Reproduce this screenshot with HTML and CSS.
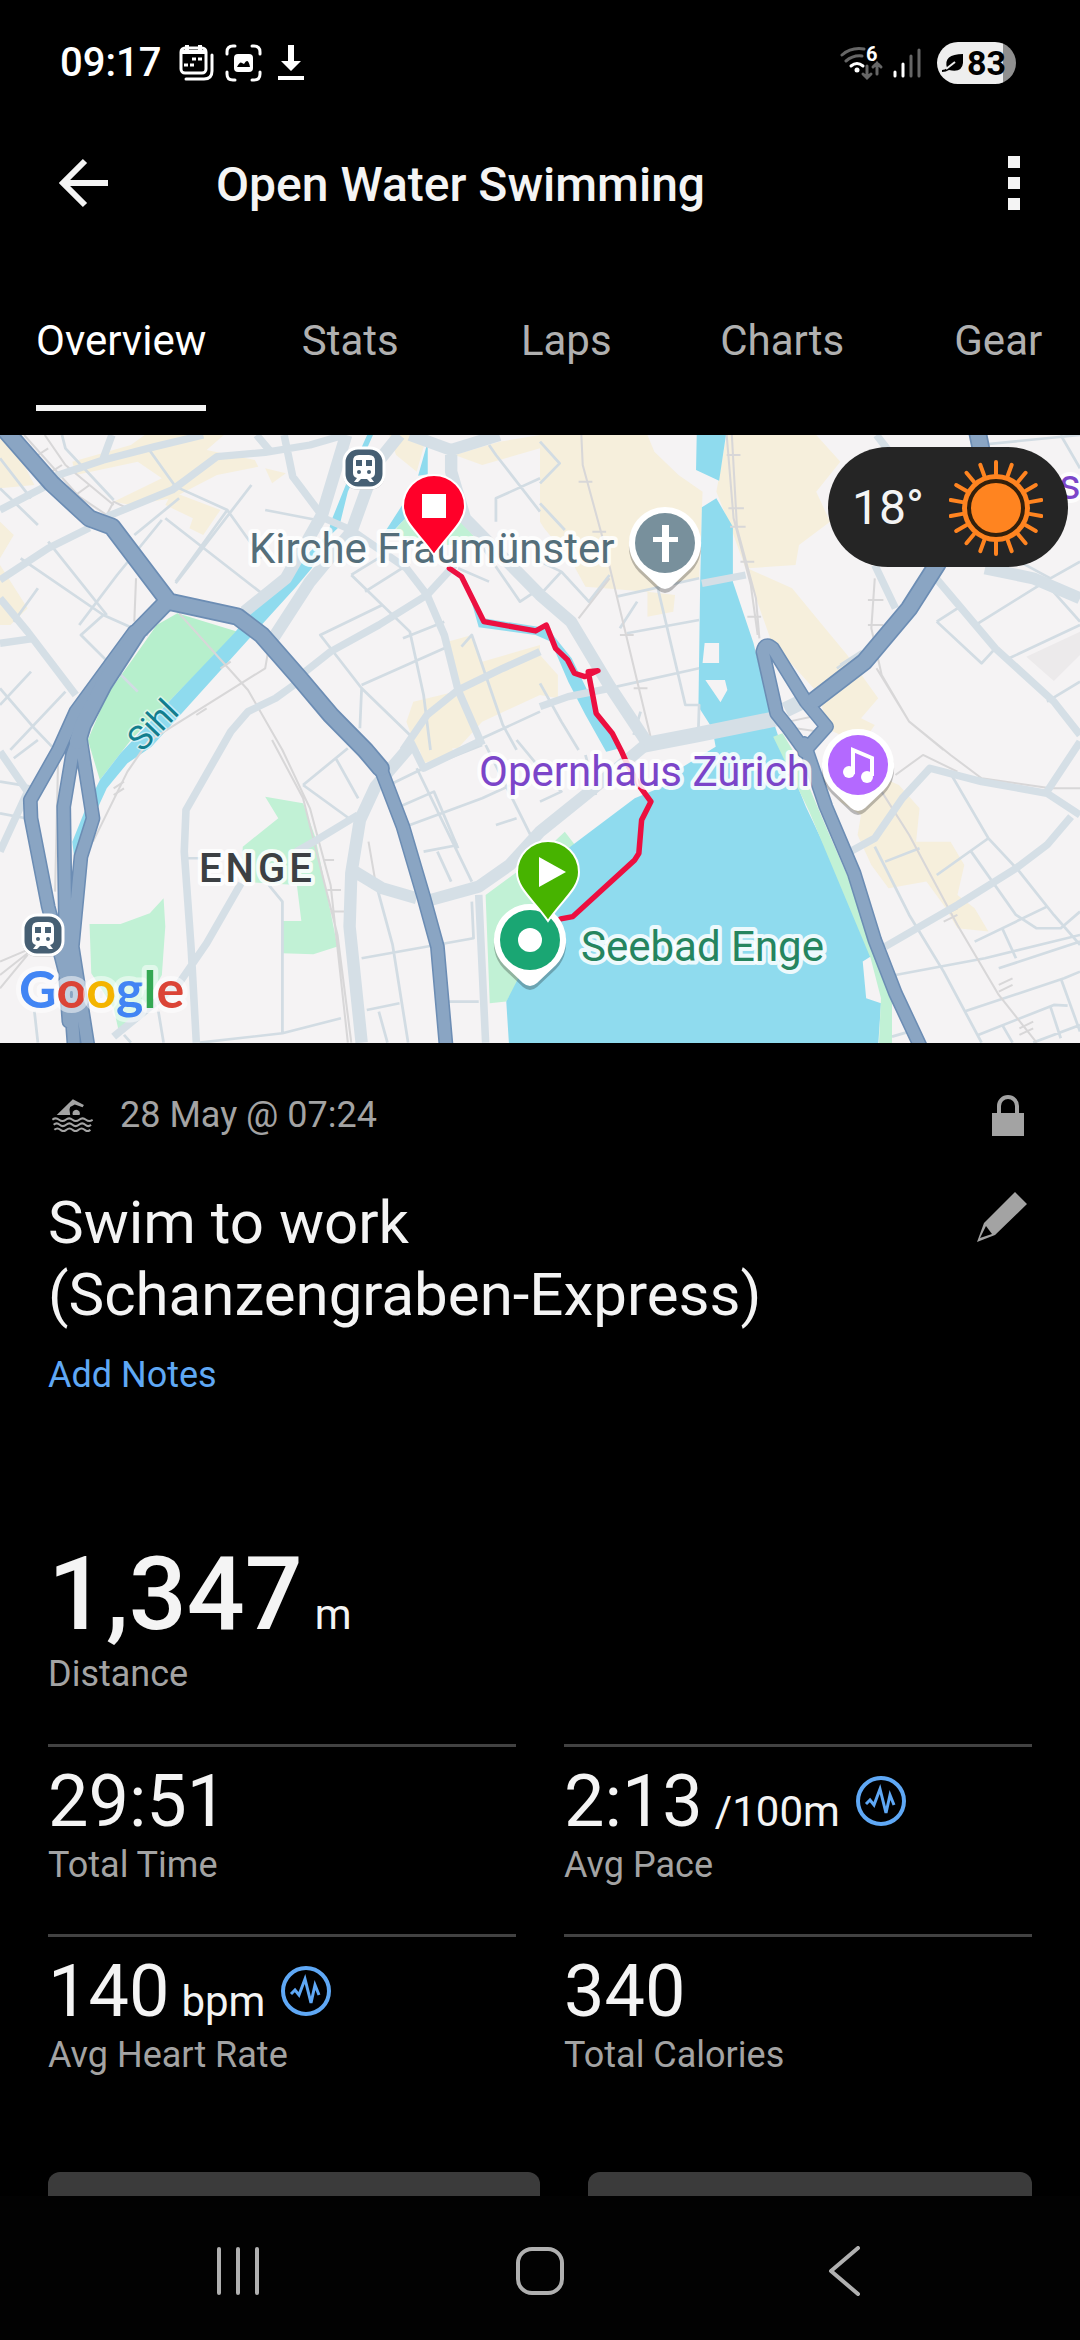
FILE: index.html
```html
<!DOCTYPE html>
<html lang="en">
<head>
    <meta charset="UTF-8">
    <meta name="viewport" content="width=device-width, initial-scale=1.0">
    <title>Open Water Swimming</title>
    <link rel="stylesheet" href="styles.css">
</head>
<body>
    <div class="status-bar">
        <div class="status-left">
            <span class="clock">09:17</span>
            <svg class="status-icon" width="36" height="38" viewBox="0 0 36 38" fill="none" stroke="#fff" stroke-width="3">
                <path d="M7 35h18q8 0 8-8V11" stroke-linecap="round"/>
                <rect x="2" y="4" width="25" height="25" rx="4"/>
                <path d="M2 8h25M8 1v5M21 1v5" stroke-width="4"/>
                <path d="M5 21h4M11 21h4M13 15h4M19 15h4" stroke-width="3"/>
            </svg>
            <svg class="status-icon" width="37" height="38" viewBox="0 0 37 38">
                <path d="M2 10V8q0-6 6-6h2M27 2h2q6 0 6 6v2M35 28v2q0 6-6 6h-2M10 36H8q-6 0-6-6v-2" fill="none" stroke="#fff" stroke-width="3" stroke-linecap="round"/>
                <rect x="9" y="10" width="19" height="18" rx="4" fill="#fff"/>
                <path d="M12 23q3-6 5-4l2 1q4-7 6 3z" fill="#000"/>
            </svg>
            <svg class="status-icon download" width="26" height="38" viewBox="0 0 26 38" fill="#fff">
                <path d="M10 1h6v16h7L13 27 3 17h7zM0 32h26v4H0z"/>
            </svg>
        </div>
        <div class="status-right">
            <svg width="44" height="42" viewBox="0 -4 44 42" fill="none" stroke-linecap="round" stroke-width="3">
                <g stroke="#666"><path d="M2 9q9-8 22-6M6 15q7-6 16-5"/><path d="M27 20v11M23 28l4 4 4-4M37 28V17M33 21l4-4 4 4"/></g>
                <path d="M11 20q6-5 12 0" stroke="#fff"/>
                <circle cx="17" cy="24" r="2.5" fill="#fff"/>
                <text x="26" y="15" class="wifi-gen">6</text>
            </svg>
            <svg width="28" height="32" viewBox="0 0 28 32" stroke-width="3" stroke-linecap="round">
                <path d="M2 25v4M10 17v12" stroke="#fff"/><path d="M18 9v20M26 3v26" stroke="#666"/>
            </svg>
            <div class="battery">
                <svg width="22" height="20" viewBox="0 0 22 20"><path d="M0 17q3 0 5-2Q1 1 21 1v9q-1 10-14 7-3 2-7 2z" fill="#000"/><path d="M4 16l9-7" stroke="#eee" stroke-width="2"/></svg>
                <span>83</span>
            </div>
        </div>
    </div>

    <header class="top-bar">
        <button class="icon-button" aria-label="Back">
            <svg width="50" height="50" viewBox="0 0 50 50" fill="none" stroke="#f4f4f4" stroke-width="6"><path d="M26 3L4 25l22 22M4 25h45"/></svg>
        </button>
        <h1>Open Water Swimming</h1>
        <button class="icon-button" aria-label="More options">
            <svg width="12" height="54" viewBox="0 0 12 54" fill="#f4f4f4"><path d="M0 0h12v12H0zM0 21h12v12H0zM0 42h12v12H0z"/></svg>
        </button>
    </header>

    <nav class="tabs">
        <a href="#overview" class="tab active"><span>Overview</span></a>
        <a href="#stats" class="tab"><span>Stats</span></a>
        <a href="#laps" class="tab"><span>Laps</span></a>
        <a href="#charts" class="tab"><span>Charts</span></a>
        <a href="#gear" class="tab"><span>Gear</span></a>
    </nav>

    <main>
        <div class="map">
            <svg class="map-canvas" viewBox="0 0 1080 608" preserveAspectRatio="xMidYMid slice">
                <defs>
                    <g id="station">
                        <rect x="-21" y="-20" width="42" height="42" rx="15" fill="#000" opacity=".2"/>
                        <rect x="-20" y="-20" width="40" height="40" rx="14" fill="#465f73" stroke="#fff" stroke-width="3"/>
                        <path d="M-5-13H5q6 0 6 6V5q0 4-4 5l3 4H6l-3-3h-6l-3 3h-4l3-4q-4-1-4-5V-7q0-6 6-6z" fill="#fff"/>
                        <path d="M-8-8h6v6h-6zM2-8h6v6H2z" fill="#465f73"/>
                        <circle cx="-5" cy="4" r="2" fill="#465f73"/><circle cx="5" cy="4" r="2" fill="#465f73"/>
                    </g>
                    <path id="pin-body" d="M0-36a36 36 0 0 1 26 61L7 43q-7 6-14 0L-26 25A36 36 0 0 1 0-36z"/>
                    <path id="marker-body" d="M0-32a31 31 0 0 1 31 31C31 16 14 27 0 48-14 27-31 16-31-1A31 31 0 0 1 0-32z"/>
                    <path id="motorway-trunk" d="M10 -20L150 145 260 250 325 275 490 500 690 545 760 600 870 730 960 840 1060 945 1105 1000M480 505L400 590 300 750 240 870 225 920M2838 -10L2860 100 2720 390 2640 520 2510 680 2365 795"/>
                    <path id="motorway-branch" d="M1105 1000L1170 1175 1230 1385 1270 1535 1295 1830M240 870L210 960 185 1115 190 1475 215 1830M390 590L220 830 170 945 88 1095 90 1150 140 1415 190 1615 200 1760M232 900L270 1150 235 1265 210 1535 255 1830M2335 945L2290 880 2255 835 2215 650Q2222 618 2244 640L2340 800 2400 875 2335 950M2335 925L2398 1115 2480 1315 2540 1515 2600 1675 2675 1840"/>
                    <g id="zone-icon">
                        <circle cx="25" cy="25" r="23" stroke-width="4"/>
                        <path d="M10 28l4-4 4 5 6-16 6 24 4-18 4 10" stroke-width="3"/>
                    </g>
                </defs>

                <g transform="scale(.3444 .3333)">
                    <!-- built-up areas -->
                    <g class="area">
                        <path d="M210 80L380 30 420 0H650L600 45 740 75 750 95 630 120 500 190 380 210 330 200 470 130 400 80 220 120z"/>
                        <path d="M0 0H30L60 70 100 150 0 160zM0 260L40 300 0 370zM0 390L80 520 30 570 0 570z"/>
                        <path d="M500 170L640 225 590 300 550 280 560 250 480 210zM770 100L830 115 790 145z"/>
                        <path d="M1130 0H1240L1210 110 1150 60zM1320 60L1450 20 1568 0V40L1400 90z"/>
                        <path d="M1300 620L1370 600 1400 680 1568 630V780L1400 860 1330 940 1210 945 1180 860 1200 800 1320 770z"/>
                        <path d="M1210 915H1300L1320 955 1230 985zM1568 660L1620 720 1620 790 1568 780z"/>
                        <path d="M1568 0H1880L1900 50 1970 120 2040 170 2030 430 1880 470 1700 455 1660 380 1580 280 1568 260zM1880 470L1960 480 1955 530 1880 545z"/>
                        <path d="M2110 0H2370L2440 80 2370 170 2410 260 2320 330 2310 390 2170 400 2300 460 2380 560 2460 660 2550 790 2500 850 2540 870 2500 930 2400 880 2380 780 2240 620 2130 300 2080 170z"/>
                        <path d="M2400 930L2440 1100 2500 1140 2490 1200 2530 1290 2580 1360 2690 1340 2740 1410 2780 1480 2870 1490 2830 1420 2780 1380 2800 1290 2760 1220 2660 1220 2670 1120 2610 1050 2500 1000z"/>
                    </g>
                    <path d="M2980 665L3136 590V660L3060 738z" fill="#eceaeb"/>

                    <!-- parks -->
                    <g class="park">
                        <path d="M515 535L690 590 500 790 380 915 290 1035 255 915 310 780 380 680 455 570z" fill="#b6efcc"/>
                        <path d="M1135 300L1180 245 1340 260 1390 320 1300 330z"/>
                        <path d="M770 1085L880 1105 915 1205 945 1355 980 1535 910 1558 820 1555V1458H875L862 1350 700 1340 705 1235 808 1150z"/>
                        <path d="M260 1467H350L435 1435 475 1390 480 1475 470 1620 400 1745 345 1790 330 1720 265 1615z"/>
                        <path d="M1410 1380L1568 1260 1640 1190 1668 1228 1590 1500 1470 1700 1422 1705z"/>
                    </g>

                    <!-- Sihl, Limmat, Schanzengraben and the lake -->
                    <g class="water">
                        <path d="M1066 0L1083 0 1010 170 985 275 960 300 905 400 860 455 720 615 440 935 370 985 310 1060 270 1150 215 1265 210 1220 245 1130 290 1035 350 955 500 790 680 595 735 525 870 380 950 300 965 250 1000 160 1040 60z"/>
                        <path d="M1242 20L1242 118 1214 122zM1168 210L1195 230 1140 290 1118 290z"/>
                        <path d="M1350 430L1390 577 1555 600 1600 620 1650 740 1700 840 1760 950 1800 940 1740 840 1660 670 1590 580 1405 550z"/>
                        <path d="M2023 0H2108L2088 137 2021 105zM2038 217L2080 190 2128 275V440L2188 625 2238 835 2268 930 2340 1115 2480 1420 2535 1560 2505 1580 2515 1690 2558 1705 2550 1830H1478L1470 1700 1500 1640 1590 1450 1650 1240 1843 1090 1948 1045 1968 1005 2078 935 2068 880 2028 815 2033 445z"/>
                    </g>
                    <path class="land" d="M2046 624H2088V684H2040zM2048 735H2105L2112 765 2092 802z"/>
                    <path class="park" d="M2245 905L2272 895 2310 960 2400 1180 2548 1530 2590 1690V1830H2552L2558 1690 2528 1570 2350 1130z"/>

                    <!-- minor streets -->
                    <g class="street">
                        <path d="M0 160L110 270M0 70L90 190M180 0L190 40 330 195M430 40L510 155 660 225 760 370M660 225L510 440M730 150L510 445M480 250L760 475M470 255L340 420 230 570M520 190L390 300M60 370L300 540 430 600M300 540L235 600 400 770M110 460L40 560M140 320L310 540M770 225L920 255M0 760L100 880 160 945M90 710L0 810M190 770L30 945M0 1040L90 1055M0 1135L75 1150M40 970L110 915"/>
                        <path d="M1020 420L1190 590 1230 780 1250 945M1020 420L1130 350M1110 510L930 600 1050 760 1200 910M1050 760L1045 880M1060 470L1190 385M1050 750L1290 640M1170 610L1290 560M1340 635L1370 600 1400 690M1390 320L1510 500 1568 460M1420 30L1440 60 1568 230M1440 260V190L1568 130M1330 400L1420 440M1400 690L1460 870 1500 945M1400 910L1568 830M880 1050L1010 940M975 970L1040 1090M880 1050L1020 1155M1130 1050L1230 1000 1400 930M1150 1120L1260 1070 1330 1240M1190 1170L1400 1090 1568 1010M1210 1000L1370 1340M1230 1250L1330 1230M1270 1250L1310 1340M1440 1170L1500 1150M1410 930L1550 1220M1500 915L1568 1000"/>
                        <path d="M1050 1570L1375 1510 1370 1400M1065 1725L1160 1705M1090 1340L1140 1530 1185 1823M1100 1730L1125 1823M1300 1700H1390M780 1350L820 1400 820 1795 580 1823M820 1795L990 1750M540 1270L620 1270M460 1730L475 1823M100 1730L110 1823M360 1800L380 1823"/>
                        <path d="M1568 20L1625 85 1568 145M1568 205L1640 285M1568 480L1630 410 1710 500 1770 420M1630 410L1568 380M1790 485L2030 430M1820 595L2030 555M1790 755L2030 700M1910 460L1990 810H2030L2028 880M1850 500L1800 580M1568 745L1630 860 1680 945M1568 1100L1630 1070 1568 1000M1700 960L1730 1080M1840 900L1860 830"/>
                        <path d="M2840 30L3136 0M3080 0L3136 100M2960 380L3050 430 3136 380M3050 430L2840 565M3050 460L3136 560M2720 560L2850 685 2890 640M2720 560L2780 520M2930 670L3136 570M3040 800L3136 740M2430 700L2500 650 2440 690"/>
                        <path d="M2540 1235L2640 1440 2740 1610 2850 1823M2570 1280L2670 1240M2760 1015L2870 1210 2960 1310 3060 1440 3136 1530M2720 1320L2870 1210M2820 1250L2950 1440 3010 1480 3080 1480 3136 1430M2830 1520L3040 1415M2600 1620L2860 1570 3136 1500M2900 1600L3136 1520M2800 1730L3090 1630 3136 1610M2910 1480L2950 1570M3080 1630L3136 1790M2840 1800L3060 1710 3100 1712M3050 1715L3080 1810M2910 1770L2940 1823M3000 1823L3136 1770M2590 1805L2640 1790"/>
                    </g>

                    <!-- tram and rail lines -->
                    <g class="rail">
                        <path d="M70 0L230 185 310 240 330 200 380 225M130 0L190 90 330 210M395 430L390 560M520 535L720 765 820 945 900 1120 960 1350 1010 1823M790 915L880 1090 980 1500 1020 1823M780 640L770 700 430 920 370 1010 270 1220M170 915L160 1370M0 1580L80 1545M0 1620L80 1555M0 1660L80 1560M1070 1220L1090 1340"/>
                        <path d="M1688 0L1692 90 1750 310 1790 480 1890 910M1770 430L1680 550M2110 0L2130 250 2180 450 2200 600M2125 0L2140 280 2195 490 2205 610M2540 430L2530 580 2560 720 2640 860 2740 945M2545 700L2640 860 2760 960 2850 1030 3050 1060H3136M2600 1020L2680 960 2780 1010M2560 1070L2640 1200 2780 1470 2900 1680 3010 1823M2290 860L2380 840M2310 880L2380 890"/>
                    </g>
                    <path class="rail ticks" d="M110 60l30-20M150 110l30-20M220 180l40-30M1680 140h40M1720 290h40M2110 60h40M2115 220h45M2120 275h45M2150 380h40M2170 545h40M2520 495h45M2520 570h45M1800 600h40M1840 760h40M2740 1440l40-20M2740 1460l40-20M2900 1650l40-20M2900 1670l40-20M2960 1780l40-20M2960 1800l40-20M330 1080l30-20M330 1060l30-20M570 840l30-20M640 700l30-20M940 1275h30M950 1365h40M960 1430h40"/>

                    <!-- main roads -->
                    <g class="road">
                        <path d="M155 125L300 75 450 35 590 0M300 70L325 0M0 225L130 155M310 245L500 165 630 65 770 52 900 30 1000 0M745 0L790 55M825 0L850 125 930 235M0 435L140 340 260 278M880 715L960 650 1100 570 1240 480 1320 390M1568 650L1460 700 1330 765 1240 840 1170 945M860 745L800 790 720 830 670 890 540 1125 535 1250 555 1540 570 1823M700 1345L600 1525 520 1645 330 1805M860 1250L920 1215 1040 1140M2718 430L2890 640 3060 800 3136 900M2460 1255L2540 1210 2620 1090 2700 1000 2850 1040 3040 1075 3136 1140M3040 1070L3136 920M2570 1535L2780 1410 2950 1300 3040 1230 3110 1145M1190 915L1230 1000 1400 915M1568 815L1650 785 1770 760"/>
                        <path d="M0 490L80 590 220 780M0 625L90 612M0 950L80 1070 0 1250M920 240L1020 285 1180 400 1240 480 1290 600 1330 765 1400 930M2545 0L2590 60M2540 390L2600 520M1390 1380L1410 1823"/>
                        <path class="wide" d="M1005 0L935 240 880 340 830 430 710 530M1160 0L1090 90 1020 290 900 440 790 615M1190 0L1310 45 1450 0M1310 45V110L1350 250 1568 480 1658 560 1768 750 1880 925 1700 1080 1568 1190 1480 1290 1390 1355 1250 1395M1190 935L1090 1055 1045 1155 1020 1315 1015 1475 1050 1823M1210 1390L1110 1360 1030 1310M2860 400L3000 430 3136 490"/>
                        <path class="bridge" d="M1870 930L2020 900 2260 850M2280 825L2340 795"/>
                        <path d="M2038 445L2165 420"/>
                    </g>

                    <!-- motorways: dark casing first, then the fill -->
                    <g class="motorway casing">
                        <use href="#motorway-branch"/>
                        <use href="#motorway-trunk" class="trunk"/>
                    </g>
                    <g class="motorway">
                        <use href="#motorway-branch"/>
                        <use href="#motorway-trunk" class="trunk"/>
                    </g>

                    <path class="route" d="M1305 400L1340 425 1405 560 1555 588 1586 570 1613 640 1648 675 1668 715 1698 725 1736 707 1708 710 1731 835 1778 895 1805 950 1820 985 1858 1055 1890 1100 1863 1155 1855 1255 1843 1275 1663 1445 1628 1452"/>
                </g>

                <g class="place">
                    <text x="249" y="128" fill="#546e7a">Kirche Fraumünster</text>
                    <text x="479" y="351" fill="#7b45c9">Opernhaus Zürich</text>
                    <text x="581" y="526" fill="#25855f">Seebad Enge</text>
                    <text x="199" y="447" class="district">ENGE</text>
                    <text x="0" y="0" class="river" transform="translate(142 318) rotate(-46)">Sihl</text>
                    <text x="1059" y="64" fill="#7b45c9">s</text>
                </g>

                <use href="#station" x="364" y="33"/>
                <use href="#station" x="43" y="500"/>

                <g transform="translate(665 108)">
                    <use href="#pin-body" y="4" fill="#000" opacity=".25"/>
                    <use href="#pin-body" fill="#fff"/>
                    <circle r="30" fill="#78909c"/>
                    <path d="M-3-18h7v12h9v5H4v20h-7V-1h-9v-5h9z" fill="#fff"/>
                </g>
                <g transform="translate(858 330)">
                    <use href="#pin-body" y="4" fill="#000" opacity=".25"/>
                    <use href="#pin-body" fill="#fff"/>
                    <circle r="30" fill="#b469ff"/>
                    <path d="M-5 9V-15L14-7V11" fill="none" stroke="#fff" stroke-width="4"/>
                    <circle cx="-9" cy="7" r="6" fill="#fff"/><circle cx="9" cy="12" r="6" fill="#fff"/>
                </g>
                <g transform="translate(530 505)">
                    <use href="#pin-body" y="4" fill="#000" opacity=".25"/>
                    <use href="#pin-body" fill="#fff"/>
                    <circle r="30" fill="#1aa673"/>
                    <circle r="12" fill="#fff"/>
                </g>
                <g transform="translate(434 72)">
                    <use href="#marker-body" fill="#ff0029" stroke="#fff" stroke-width="2"/>
                    <path d="M-12-13h24v24h-24z" fill="#fff"/>
                </g>
                <g transform="translate(548 438)">
                    <use href="#marker-body" fill="#47b300" stroke="#fff" stroke-width="2"/>
                    <path d="M-9-16L18-1-9 14z" fill="#fff"/>
                </g>

                <text x="19" y="573" class="google"><tspan fill="#4285f4">G</tspan><tspan fill="#db4437">o</tspan><tspan fill="#f4b400">o</tspan><tspan fill="#4285f4">g</tspan><tspan fill="#34a853">l</tspan><tspan fill="#db4437">e</tspan></text>
            </svg>

            <div class="weather">
                <span>18°</span>
                <svg width="94" height="98" viewBox="-47 -49 94 98">
                    <g id="rays" stroke="#ff8420" stroke-width="4" stroke-linecap="round"></g>
                    <circle r="34" fill="#ff8420"/>
                    <circle r="27" fill="#ff8420" stroke="#33200c" stroke-width="4"/>
                </svg>
            </div>
        </div>

        <section class="details">
            <div class="meta">
                <svg width="41" height="34" viewBox="36 54 122 100" fill="#a3a3a3">
                    <path d="M50 104L98 57 131 74 127 81 104 73 90 80 88 88 90 104z"/>
                    <path d="M98 104a11 11 0 1 1 20 0z"/>
                    <path d="M37 118q10-8 20 0t20 0 20 0 20 0 20 0 20 0M41 133q9-8 18 0t19 0 19 0 19 0 19 0 17 0M43 148q9-8 18 0t18 0 18 0 18 0 18 0 17 0" fill="none" stroke="#a3a3a3" stroke-width="6"/>
                </svg>
                <span>28 May @ 07:24</span>
                <svg class="lock" width="32" height="41" viewBox="0 0 32 41"><path d="M7 20V11a9 9 0 0 1 18 0v9" fill="none" stroke="#a3a3a3" stroke-width="4"/><path d="M0 18h32v23H0z" fill="#a3a3a3"/></svg>
            </div>

            <div class="activity-title">
                <h2>Swim to work (Schanzengraben-Express)</h2>
                <button class="icon-button" aria-label="Edit">
                    <svg width="50" height="50" viewBox="0 0 50 50"><path d="M38 0L50 12 18 43 0 50 7 31zM9 34L3 46 15 42z" fill="#a3a3a3" fill-rule="evenodd"/></svg>
                </button>
            </div>
            <a href="#notes" class="notes">Add Notes</a>

            <div class="distance">
                <div class="value">1,347 <small>m</small></div>
                <div class="label">Distance</div>
            </div>

            <div class="stats">
                <div class="stat">
                    <div class="value">29:51</div>
                    <div class="label">Total Time</div>
                </div>
                <div class="stat">
                    <div class="value">2:13 <small>/100m</small>
                        <svg class="zone" width="50" height="50" viewBox="0 0 50 50"><use href="#zone-icon"/></svg>
                    </div>
                    <div class="label">Avg Pace</div>
                </div>
                <div class="stat">
                    <div class="value">140 <small>bpm</small>
                        <svg class="zone" width="50" height="50" viewBox="0 0 50 50"><use href="#zone-icon"/></svg>
                    </div>
                    <div class="label">Avg Heart Rate</div>
                </div>
                <div class="stat">
                    <div class="value">340</div>
                    <div class="label">Total Calories</div>
                </div>
            </div>

            <div class="cards">
                <div class="card main-card"></div>
                <div class="card"></div>
            </div>
        </section>
    </main>

    <footer class="system-nav">
        <button class="icon-button" aria-label="Recent apps"><svg width="50" height="50" viewBox="0 0 50 50"><path d="M6 3v44M25 3v44M44 3v44"/></svg></button>
        <button class="icon-button" aria-label="Home"><svg width="50" height="50" viewBox="0 0 50 50"><rect x="3" y="3" width="44" height="44" rx="14"/></svg></button>
        <button class="icon-button" aria-label="System back"><svg width="50" height="50" viewBox="0 0 50 50"><path d="M41 2L14 25l27 23"/></svg></button>
    </footer>

    <script>
        // sun rays, one every 20 degrees
        const rays = document.getElementById('rays');
        for (let a = 0; a < 360; a += 20) {
            const line = document.createElementNS('http://www.w3.org/2000/svg', 'path');
            line.setAttribute('d', 'M0-34V-46');
            line.setAttribute('transform', `rotate(${a})`);
            rays.appendChild(line);
        }
    </script>
</body>
</html>
```
FILE: styles.css
```css
* {
    box-sizing: border-box;
}
body {
    margin: 0;
    height: 100vh;
    display: flex;
    flex-direction: column;
    overflow: hidden;
    background: #000;
    color: #f4f4f4;
    font-family: Roboto, sans-serif;
    font-size: 36px;
    line-height: 42px;
}
h1, h2 {
    margin: 0;
}
svg {
    display: block;
    flex-shrink: 0;
}
.icon-button {
    display: flex;
    padding: 0;
    border: 0;
    background: none;
    cursor: pointer;
}

/* status bar */
.status-bar {
    display: flex;
    justify-content: space-between;
    padding: 42px 64px 39px 60px;
}
.status-left, .status-right {
    display: flex;
    align-items: center;
}
.status-left {
    gap: 10px;
}
.clock {
    margin-right: 8px;
    font-size: 40px;
    font-weight: 500;
    color: #fff;
}
.download {
    margin-left: 6px;
}
.status-right {
    gap: 9px;
}
.wifi-gen {
    font-size: 20px;
    font-weight: 700;
    fill: #fff;
}
.battery {
    display: flex;
    align-items: center;
    gap: 3px;
    width: 79px;
    height: 42px;
    margin-left: 7px;
    padding-left: 5px;
    border-radius: 21px;
    background: linear-gradient(to right, #eee 83%, #8f8f8f 83%);
    color: #000;
    font-size: 34px;
    font-weight: 700;
}

/* title bar */
.top-bar {
    display: flex;
    align-items: center;
    height: 120px;
    padding: 0 60px 0 59px;
}
.top-bar h1 {
    flex: 1;
    margin-left: 107px;
    padding-top: 3px;
    font-size: 48px;
    font-weight: 500;
    line-height: 56px;
}

/* tabs */
.tabs {
    display: flex;
    flex-shrink: 0;
    height: 192px;
    overflow: hidden;
}
.tab {
    flex-shrink: 0;
    min-width: 216px;
    padding: 74px 36px 0;
    text-align: center;
    text-decoration: none;
    font-size: 42px;
    line-height: 48px;
    color: #b0b0b0;
}
.tab span {
    display: block;
    padding-bottom: 40px;
}
.tab.active {
    color: #fff;
}
.tab.active span {
    border-bottom: 6px solid #f4f4f4;
}

main {
    flex: 1;
    min-height: 0;
    overflow: hidden;
}

/* map */
.map {
    position: relative;
    height: 608px;
    background: #f5f3f4;
}
.map-canvas {
    width: 100%;
    height: 100%;
}
.area {
    fill: #f6efdc;
}
.park {
    fill: #c1f1d5;
}
.water {
    fill: #8fdbee;
}
.land {
    fill: #f5f3f4;
}
.street, .rail, .road, .motorway {
    fill: none;
    stroke-linejoin: round;
}
.street {
    stroke: #d2dce3;
    stroke-width: 8;
}
.rail {
    stroke: #d8d7d8;
    stroke-width: 6;
}
.road {
    stroke: #d5dfe6;
    stroke-width: 22;
}
.road .wide {
    stroke-width: 36;
}
.road .bridge {
    stroke-width: 46;
}
.motorway {
    stroke: #8aa5c3;
    stroke-width: 34;
    stroke-linecap: round;
}
.motorway .trunk {
    stroke-width: 44;
}
.motorway.casing {
    stroke: #6c8db4;
    stroke-width: 43;
}
.motorway.casing .trunk {
    stroke-width: 54;
}
.route {
    fill: none;
    stroke: #ec0f40;
    stroke-width: 16;
    stroke-linejoin: round;
    stroke-linecap: round;
}
.place text {
    font-size: 42px;
    stroke: #fff;
    stroke-width: 8px;
    stroke-linejoin: round;
    stroke-opacity: .85;
    paint-order: stroke;
}
.place .district {
    fill: #3c4043;
    font-size: 40px;
    font-weight: 500;
    letter-spacing: 4px;
}
.place .river {
    fill: #127e8e;
    font-size: 34px;
    stroke-width: 3px;
    stroke-opacity: .5;
}
.google {
    font-family: Lato, sans-serif;
    font-size: 52px;
    font-weight: 700;
    stroke: #fff;
    stroke-width: 10px;
    stroke-linejoin: round;
    stroke-opacity: .5;
    paint-order: stroke;
}
.weather {
    position: absolute;
    top: 12px;
    right: 12px;
    display: flex;
    align-items: center;
    justify-content: space-between;
    width: 240px;
    height: 120px;
    padding: 2px 25px 0 24px;
    border-radius: 60px;
    background: #252525;
    font-size: 48px;
}

/* activity details */
.details {
    padding: 51px 48px 0;
}
.meta {
    display: flex;
    align-items: center;
    gap: 27px;
    padding: 0 8px 0 4px;
    color: #a3a3a3;
}
.lock {
    margin-left: auto;
}
.activity-title {
    display: flex;
    justify-content: space-between;
    align-items: flex-start;
    margin-top: 51px;
}
.activity-title h2 {
    max-width: 800px;
    font-size: 60px;
    font-weight: 400;
    line-height: 72px;
}
.activity-title .icon-button {
    margin: 5px 5px 0 0;
}
.notes {
    display: block;
    margin-top: 23px;
    color: #5fa8f5;
    text-decoration: none;
}
.label {
    color: #a3a3a3;
}
.value {
    display: flex;
    align-items: baseline;
    gap: 12px;
}
.value small {
    font-size: 42px;
    font-weight: 400;
}
.distance {
    margin: 138px 0 49px;
}
.distance .value {
    height: 119px;
    font-size: 102px;
    font-weight: 500;
    line-height: 120px;
}
.stats {
    display: grid;
    grid-template-columns: 1fr 1fr;
    column-gap: 48px;
}
.stat {
    padding: 13px 0 48px;
    border-top: 3px solid #424242;
}
.stat .value {
    height: 84px;
    font-size: 72px;
    line-height: 84px;
}
.zone {
    margin-left: 4px;
    fill: none;
    stroke: #5fa8f5;
}
.cards {
    display: flex;
    gap: 48px;
    margin-top: 48px;
}
.card {
    flex: 1;
    height: 300px;
    border-radius: 12px;
    background: #3b3b3b;
}
.main-card {
    flex: none;
    width: 50%;
}

/* system navigation */
.system-nav {
    display: flex;
    justify-content: space-around;
    align-items: center;
    height: 144px;
    padding: 6px 87px 0;
    background: #020202;
}
.system-nav svg {
    fill: none;
    stroke: #b0b0b0;
    stroke-width: 4;
    stroke-linecap: round;
    stroke-linejoin: round;
}
```
